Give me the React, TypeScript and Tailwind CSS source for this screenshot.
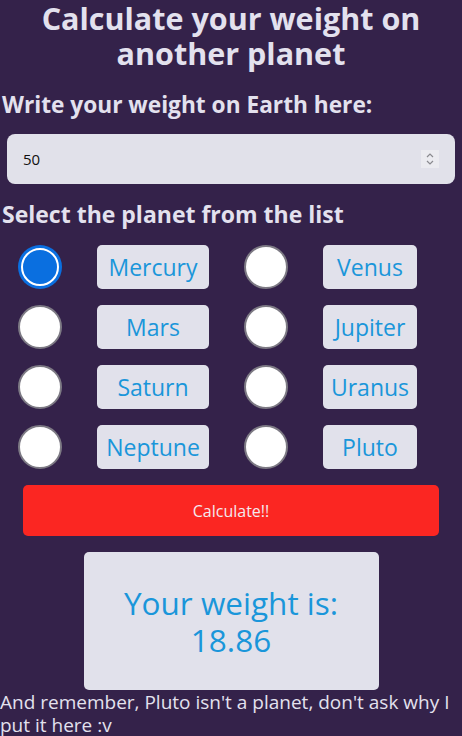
import React from "react";

const planets: [string, string][] = [
  ["Mercury", "Venus"],
  ["Mars", "Jupiter"],
  ["Saturn", "Uranus"],
  ["Neptune", "Pluto"],
];

function Radio({ checked }: { checked?: boolean }) {
  if (checked) {
    return (
      <div className="w-[44px] h-[44px] rounded-full bg-[#0a6fe0] p-[3px]">
        <div className="w-full h-full rounded-full border-2 border-white bg-[#0a6fe0]" />
      </div>
    );
  }
  return <div className="w-[44px] h-[44px] rounded-full bg-white border-2 border-[#7d7a84]" />;
}

function Label({ text, w }: { text: string; w: string }) {
  return (
    <div
      className={`${w} h-[44px] rounded-[5px] bg-[#e1e1eb] text-[#1a96da] text-[23px] flex items-center justify-center`}
    >
      {text}
    </div>
  );
}

export default function App() {
  return (
    <div
      className="min-h-[736px] w-[462px] bg-[#34224a] text-[#e3e1ee] overflow-hidden"
      style={{ fontFamily: '"Open Sans", "Noto Sans", sans-serif' }}
    >
      <h1 className="text-[30.5px] font-bold leading-[35px] text-center pt-[1px]">
        Calculate your weight on
        <br />
        another planet
      </h1>
      <h2 className="mt-[19px] text-[22.7px] font-bold leading-[30px] pl-[2px]">
        Write your weight on Earth here:
      </h2>
      <div className="mt-[14px] mx-[7px] h-[50px] rounded-[8px] bg-[#e1e1ea] flex items-center pl-[16px] pr-[16px]">
        <span className="text-[#111] text-[15px] flex-1">50</span>
        <div className="w-[18px] h-[18px] bg-[#ebebf0] flex flex-col items-center justify-center">
          <svg width="10" height="14" viewBox="0 0 10 14" fill="none" stroke="#8a8a8f" strokeWidth="1.2">
            <path d="M2 5 L5 2 L8 5" />
            <path d="M2 9 L5 12 L8 9" />
          </svg>
        </div>
      </div>
      <h2 className="mt-[15px] text-[23px] font-bold leading-[30px] pl-[2px]">
        Select the planet from the list
      </h2>
      <div className="mt-[16px] pl-[18px] grid grid-cols-[44px_112px_44px_94px] gap-x-[35px] gap-y-[16px]">
        {planets.map(([a, b], i) => (
          <React.Fragment key={a}>
            <Radio checked={i === 0} />
            <Label text={a} w="w-[112px]" />
            <Radio />
            <Label text={b} w="w-[94px]" />
          </React.Fragment>
        ))}
      </div>
      <div className="mt-[16px] mx-[23px] h-[51px] rounded-[5px] bg-[#fb2622] text-[#f4e9ee] text-[16px] flex items-center justify-center">
        Calculate!!
      </div>
      <div className="mt-[16px] mx-auto w-[295px] h-[138px] rounded-[5px] bg-[#e1e1eb] text-[#1a96da] text-[31.5px] leading-[37px] flex items-center justify-center text-center">
        <div>
          Your weight is:
          <br />
          18.86
        </div>
      </div>
      <p className="text-[19px] leading-[23px] pt-[1px]">
        And remember, Pluto isn't a planet, don't ask why I put it here :v
      </p>
    </div>
  );
}
